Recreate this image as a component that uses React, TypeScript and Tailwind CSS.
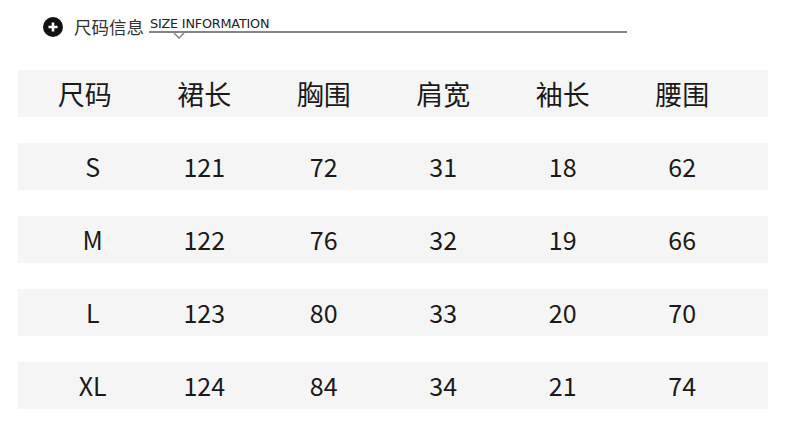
import React from 'react';

const headers = ['尺码', '裙长', '胸围', '肩宽', '袖长', '腰围'];

const rows = [
  ['S', '121', '72', '31', '18', '62'],
  ['M', '122', '76', '32', '19', '66'],
  ['L', '123', '80', '33', '20', '70'],
  ['XL', '124', '84', '34', '21', '74'],
];

const cjk = "font-['Noto_Sans_CJK_SC','Noto_Sans',sans-serif]";

// Title with the plus badge and the underline notch
const Title = () => (
  <div className="flex items-center h-[70px] pl-[43px] pb-[16px]">
    <div className="w-[20px] h-[20px] rounded-full bg-[#111] flex items-center justify-center">
      <svg width="12" height="12" viewBox="0 0 12 12">
        <path d="M6 1.5v9M1.5 6h9" stroke="#fff" strokeWidth="2.6" strokeLinecap="butt" />
      </svg>
    </div>
    <span className={`${cjk} ml-[11px] text-[17.5px] leading-none text-[#333]`}>尺码信息</span>
    <div className="relative ml-[5px] w-[478px] h-[20px]">
      <span className="absolute left-[1px] top-[1px] font-['DejaVu_Sans',sans-serif] text-[12.8px] leading-none tracking-[-0.2px] text-[#222]">
        SIZE INFORMATION
      </span>
      <div className="absolute left-0 right-0 top-[14px] h-[2px] bg-[#858585]" />
      <svg className="absolute left-[24px] top-[15px]" width="12" height="7" viewBox="0 0 12 7">
        <path d="M1 1l5 5 5-5" fill="none" stroke="#858585" strokeWidth="1.5" />
      </svg>
    </div>
  </div>
);

export default function App() {
  return (
    <div className="w-[790px] h-[441px] bg-white overflow-hidden">
      <Title />
      <div className="flex flex-col gap-[26px] ml-[18px] w-[750px]">
        <div className="h-[47px] bg-[#f5f5f5] pl-[7px] grid grid-cols-[repeat(6,119.5px)] items-center">
          {headers.map((h) => (
            <div key={h} className={`${cjk} text-center text-[27px] leading-none text-[#1a1a1a]`}>
              {h}
            </div>
          ))}
        </div>
        {rows.map((r) => (
          <div key={r[0]} className="h-[47px] bg-[#f5f5f5] pl-[7px] grid grid-cols-[repeat(6,119.5px)] items-center">
            {r.map((v, i) => (
              <div
                key={i}
                className={`${cjk} text-center text-[25px] leading-none text-[#1a1a1a] ${i === 0 ? 'pl-[16px]' : ''}`}
              >
                {v}
              </div>
            ))}
          </div>
        ))}
      </div>
    </div>
  );
}
